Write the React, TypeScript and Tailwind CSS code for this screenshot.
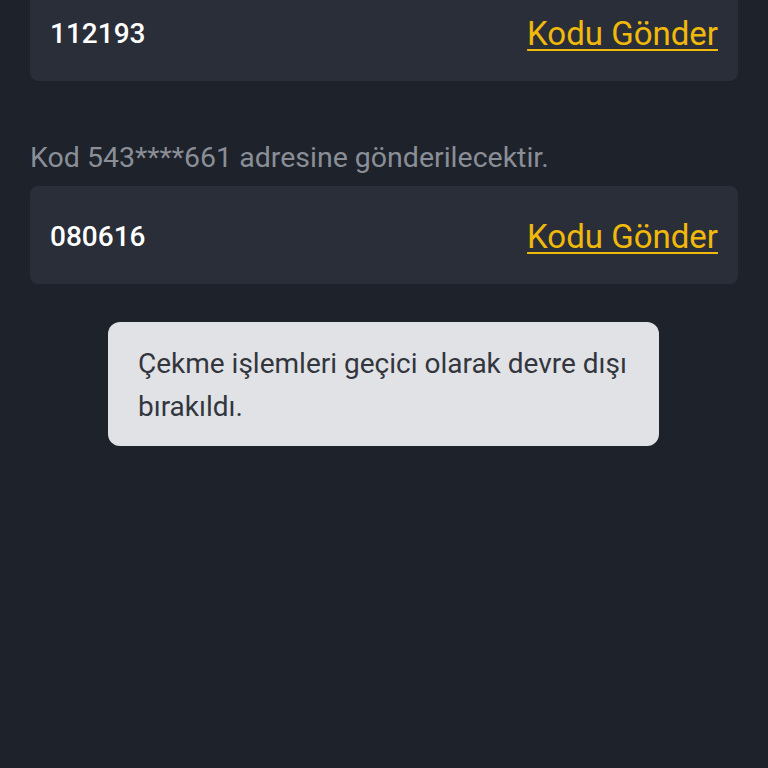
export default function App() {
  const font = { fontFamily: 'Roboto, "Noto Sans", sans-serif' }
  return (
    <div className="w-[768px] h-[768px] overflow-hidden bg-[#1e222b]" style={font}>
      <div className="px-[30px]">
        <div className="-mt-[17px] h-[98px] rounded-lg bg-[#2a2e38] flex items-center justify-between px-5 pt-[3px]">
          <span className="text-[28px] font-medium text-white">112193</span>
          <span className="text-[33px] text-[#f0b90b] underline underline-offset-[4px] decoration-2">Kodu Gönder</span>
        </div>
        <div className="mt-[61px] text-[28.5px] text-[#8a8e97] leading-[32px]">
          Kod 543****661 adresine gönderilecektir.
        </div>
        <div className="mt-[12px] h-[98px] rounded-lg bg-[#2a2e38] flex items-center justify-between px-5 pt-[3px]">
          <span className="text-[28px] font-medium text-white">080616</span>
          <span className="text-[33px] text-[#f0b90b] underline underline-offset-[4px] decoration-2">Kodu Gönder</span>
        </div>
      </div>
      <div className="mt-[38px] ml-[108px] w-[551px] rounded-xl bg-[#e1e2e6] px-[30px] pt-[20px] pb-[18px]">
        <p className="text-[28px] leading-[43px] text-[#33363d]">
          Çekme işlemleri geçici olarak devre dışı bırakıldı.
        </p>
      </div>
    </div>
  )
}
